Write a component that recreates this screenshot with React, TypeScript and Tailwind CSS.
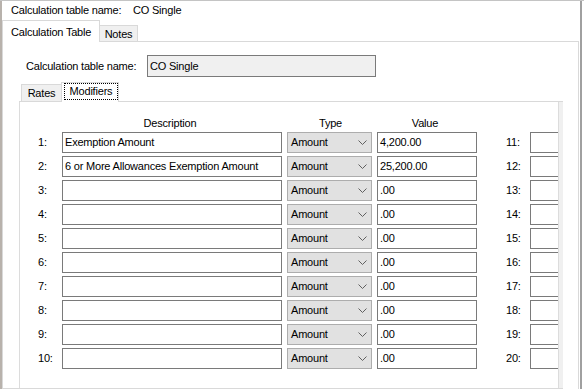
import React from "react";

const rows = [
  { n: 1, d: "Exemption Amount", v: "4,200.00" },
  { n: 2, d: "6 or More Allowances Exemption Amount", v: "25,200.00" },
  { n: 3, d: "", v: ".00" },
  { n: 4, d: "", v: ".00" },
  { n: 5, d: "", v: ".00" },
  { n: 6, d: "", v: ".00" },
  { n: 7, d: "", v: ".00" },
  { n: 8, d: "", v: ".00" },
  { n: 9, d: "", v: ".00" },
  { n: 10, d: "", v: ".00" },
];

function Chevron() {
  return (
    <svg width="9" height="5" viewBox="0 0 9 5" className="block">
      <path d="M0.5 0.5 L4.5 4.5 L8.5 0.5" fill="none" stroke="#606060" strokeWidth="1" />
    </svg>
  );
}

export default function App() {
  return (
    <div className="w-[584px] h-[389px] overflow-hidden bg-white flex border-t border-[#c4c4c4] text-[11px] tracking-[-0.2px] text-black font-['Liberation_Sans',Arial,sans-serif] leading-[13px]">
      <div className="w-[2px] shrink-0 bg-[#b8b2ac]" />
      <div className="w-[577px] shrink-0 flex flex-col">
        {/* header */}
        <div className="h-[19px] shrink-0 flex items-center pl-[9px]">
          <span className="w-[122px]">Calculation table name:</span>
          <span>CO Single</span>
        </div>
        {/* outer tabs */}
        <div className="h-[22px] shrink-0 flex items-end">
          <div className="h-[22px] w-[98px] border-l border-t border-r border-[#d9d9d9] bg-white pl-[8px] pt-[5px]">
            Calculation Table
          </div>
          <div className="h-[17px] w-[38px] border-t border-r border-b border-[#d9d9d9] bg-[#f0f0f0] flex items-center justify-center pt-[1px]">
            Notes
          </div>
          <div className="flex-1 h-[1px] bg-[#d9d9d9]" />
        </div>
        {/* main panel */}
        <div className="flex-1 flex flex-col border-l border-r border-[#d9d9d9] min-h-0">
          <div className="mt-[13px] flex items-center pl-[23px] shrink-0">
            <span className="w-[121px]">Calculation table name:</span>
            <div className="w-[229px] h-[22px] border border-[#7a7a7a] bg-[#f0f0f0] flex items-center pl-[2px]">
              CO Single
            </div>
          </div>
          <div className="flex-1 flex flex-col mt-[5px] w-[560px] pl-[16px] border-b border-[#d9d9d9] min-h-0">
            {/* inner tabs */}
            <div className="h-[20px] shrink-0 flex items-end">
              <div className="w-[2px] h-[1px] bg-[#d9d9d9]" />
              <div className="w-[40px] h-[18px] border-l border-t border-b border-[#d9d9d9] bg-[#f0f0f0] flex items-center justify-center pt-[1px]">
                Rates
              </div>
              <div className="w-[58px] h-[20px] border-l border-t border-r border-[#d9d9d9] bg-white pl-[2px]">
                <div className="w-[54px] h-[17px] border border-dotted border-black flex items-center justify-center">
                  Modifiers
                </div>
              </div>
              <div className="flex-1 h-[1px] bg-[#d9d9d9]" />
            </div>
            {/* inner panel */}
            <div className="flex-1 flex min-h-0">
              <div className="w-[544px] border-l border-r border-[#dcdcdc] overflow-hidden flex flex-col">
                <div className="mt-[15px] h-[13px] flex shrink-0">
                  <div className="ml-[40px] w-[220px] text-center">Description</div>
                  <div className="ml-[8px] w-[85px] text-center">Type</div>
                  <div className="ml-[2px] w-[100px] text-center">Value</div>
                </div>
                <div className="mt-[2px] flex flex-col gap-[3px]">
                  {rows.map((r) => (
                    <div key={r.n} className="h-[21px] flex items-center shrink-0">
                      <div className="w-[42px] pl-[18px] shrink-0">{r.n}:</div>
                      <div className="w-[220px] h-[21px] border border-[#7a7a7a] bg-white flex items-center pl-[2px] shrink-0 whitespace-nowrap">
                        {r.d}
                      </div>
                      <div className="ml-[5px] w-[85px] h-[21px] border border-[#adadad] bg-[#e1e1e1] flex items-center justify-between pl-[3px] pr-[4px] shrink-0">
                        <span>Amount</span>
                        <Chevron />
                      </div>
                      <div className="ml-[5px] w-[100px] h-[21px] border border-[#7a7a7a] bg-white flex items-center pl-[2px] shrink-0">
                        {r.v}
                      </div>
                      <div className="ml-[29px] w-[24px] shrink-0">{r.n + 10}:</div>
                      <div className="w-[60px] h-[21px] border border-[#7a7a7a] bg-white shrink-0" />
                    </div>
                  ))}
                </div>
              </div>
              <div className="w-[4px] bg-[#f0f0f0]" />
            </div>
          </div>
        </div>
      </div>
      <div className="w-[1px] shrink-0 bg-white" />
      <div className="w-[2px] shrink-0 bg-[#a0a0a0]" />
      <div className="w-[2px] shrink-0 bg-white" />
    </div>
  );
}
